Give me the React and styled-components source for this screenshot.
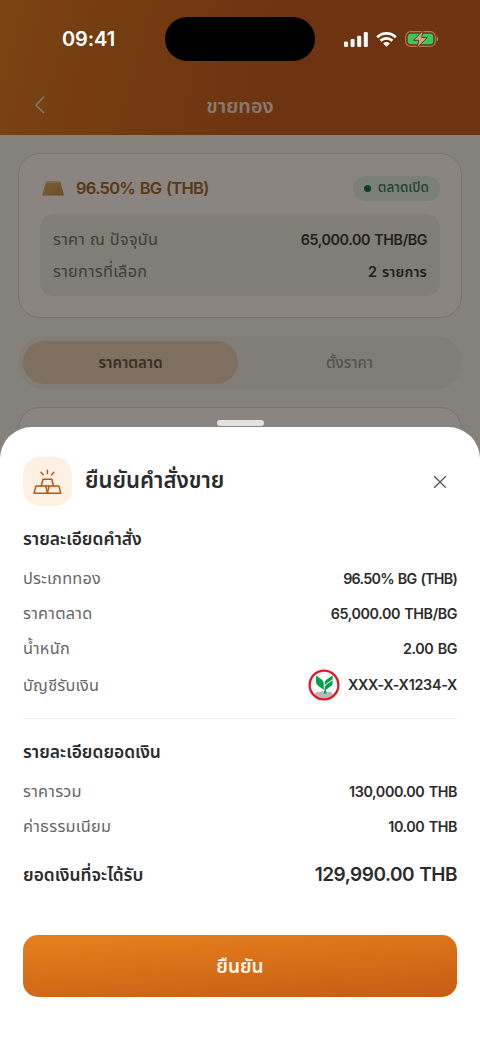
import React from 'react';
import styled, { createGlobalStyle } from 'styled-components';

const GlobalStyle = createGlobalStyle`
  * {
    box-sizing: border-box;
  }
  body {
    margin: 0;
    font-family: Inter, 'Noto Sans Thai', 'Noto Sans', sans-serif;
  }
  p, h1, h2, h3 {
    margin: 0;
  }
  button {
    padding: 0;
    border: 0;
    background: none;
    font-family: inherit;
  }
`;

const Screen = styled.div`
  position: relative;
  width: 480px;
  height: 1044px;
  overflow: hidden;
  background: #f2ebe0;
`;

const Header = styled.header`
  height: 135px;
  background: linear-gradient(105deg, #de7c21 0%, #c85f1f 55%, #c85d1f 100%);
`;

const StatusBar = styled.div`
  position: relative;
  z-index: 2;
  display: grid;
  grid-template-columns: 165px 150px 165px;
  align-items: center;
  height: 77px;
  color: #fff;
`;

const Time = styled.span`
  padding: 1px 0 0 12px;
  text-align: center;
  font-size: 20px;
  font-weight: 600;
  letter-spacing: -0.1px;
`;

const Island = styled.div`
  height: 44px;
  border-radius: 22px;
  background: #000;
`;

const StatusIcons = styled.div`
  display: flex;
  align-items: center;
  gap: 8px;
  padding: 1px 0 0 29px;
`;

const NavBar = styled.div`
  display: grid;
  grid-template-columns: 80px 1fr 80px;
  align-items: center;
  height: 56px;
  color: #f3ded0;
`;

const BackButton = styled.button`
  display: flex;
  justify-content: center;
  color: inherit;
`;

const NavTitle = styled.h1`
  padding-top: 1px;
  text-align: center;
  font-size: 19.9px;
  font-weight: 600;
  line-height: 28px;
`;

const Content = styled.main`
  display: flex;
  flex-direction: column;
  gap: 18px;
  padding: 18px 18px 0;
`;

const Card = styled.section`
  height: 165px;
  padding: 20px 21px;
  border: 1px solid #dad1ca;
  border-radius: 22px;
  background: #fbf2ea;
`;

const CardHead = styled.div`
  display: flex;
  align-items: center;
  height: 28px;
  margin-bottom: 12px;
  padding-left: 2px;
`;

const CardTitle = styled.h2`
  margin-left: 12px;
  font-size: 16.5px;
  font-weight: 600;
  letter-spacing: -0.72px;
  word-spacing: 1px;
  color: #a4662a;
`;

const Badge = styled.span`
  display: flex;
  align-items: center;
  gap: 7px;
  height: 25px;
  margin-left: auto;
  padding: 0 11px;
  border-radius: 13px;
  background: #dfe9db;
  color: #34795a;
  font-size: 13.5px;
  font-weight: 500;
`;

const Dot = styled.i`
  width: 7px;
  height: 7px;
  border-radius: 50%;
  background: #17704f;
`;

const PriceBox = styled.div`
  display: grid;
  grid-template-rows: 32px 32px;
  align-content: center;
  height: 82px;
  padding: 2px 13px 0;
  border-radius: 13px;
  background: #ece5da;
`;

const Tabs = styled.div`
  display: grid;
  grid-template-columns: 1fr 1fr;
  gap: 4px;
  height: 53px;
  padding: 5px;
  border-radius: 27px;
  background: #ece4d9;
`;

const Tab = styled.button`
  padding-top: 2px;
  border-radius: 22px;
  background: ${({ $active }) => ($active ? '#e7caaf' : 'transparent')};
  color: ${({ $active }) => ($active ? '#6a5545' : '#9d958c')};
  font-size: 15px;
  font-weight: ${({ $active }) => ($active ? 600 : 500)};
`;

const Backdrop = styled.div`
  position: absolute;
  inset: 0;
  z-index: 1;
  background: rgba(0, 0, 0, 0.45);
`;

const Sheet = styled.div`
  position: absolute;
  left: 0;
  right: 0;
  bottom: 0;
  z-index: 2;
  height: 617px;
  padding: 30px 23px 0;
  border-radius: 32px 32px 0 0;
  background: #fff;
`;

const Handle = styled.div`
  position: absolute;
  top: -7px;
  left: 217px;
  width: 47px;
  height: 6px;
  border-radius: 3px;
  background: #e3e2e1;
`;

const SheetHead = styled.div`
  display: flex;
  align-items: center;
  height: 49px;
  margin-bottom: 18px;
`;

const IconTile = styled.div`
  display: flex;
  align-items: center;
  justify-content: center;
  width: 49px;
  height: 49px;
  border-radius: 17px;
  background: #fef1e3;
`;

const SheetTitle = styled.h2`
  margin-left: 13px;
  padding-bottom: 1px;
  font-size: 22.1px;
  font-weight: 600;
  color: #2b2b2b;
`;

const CloseButton = styled.button`
  display: flex;
  margin: 0 10.5px 0 auto;
`;

const SectionTitle = styled.h3`
  height: 28px;
  font-size: 17.4px;
  font-weight: 600;
  line-height: 29px;
  color: #2b2b2b;
`;

const Rows = styled.div`
  padding-top: 9px;
`;

const Row = styled.div`
  display: flex;
  align-items: center;
  justify-content: space-between;
  height: ${({ $height }) => $height || 35}px;
`;

const Label = styled.span`
  padding-bottom: 2px;
  font-size: 16.3px;
  font-weight: 400;
  line-height: 24px;
  letter-spacing: 0.25px;
  color: ${({ $dim }) => ($dim ? '#776f68' : '#666')};
`;

const Value = styled.span`
  display: flex;
  align-items: center;
  gap: 8px;
  font-size: 14.3px;
  font-weight: 600;
  line-height: 24px;
  letter-spacing: ${({ $spacing }) => $spacing ?? -0.4}px;
  word-spacing: 1.1px;
  color: ${({ $dim }) => ($dim ? '#403a35' : '#2b2b2b')};
`;

const AccountValue = styled(Value)`
  padding-bottom: 2px;
`;

const Divider = styled.hr`
  height: 1px;
  margin: 13px 0 18px;
  border: 0;
  background: #f1f1f1;
`;

const TotalRow = styled(Row)`
  margin-top: 10px;
  height: 42px;
`;

const TotalLabel = styled.span`
  padding-top: 1px;
  font-size: 17.4px;
  font-weight: 600;
  color: #2b2b2b;
`;

const TotalValue = styled.span`
  padding-bottom: 2px;
  font-size: 19px;
  font-weight: 600;
  letter-spacing: -0.5px;
  word-spacing: 1px;
  color: #2b2b2b;
`;

const ConfirmButton = styled.button`
  display: block;
  width: 100%;
  height: 62px;
  margin-top: 39px;
  padding-top: 3px;
  border-radius: 15px;
  background: linear-gradient(176deg, #e37d1c 10%, #c75e14 95%);
  color: #fff5e8;
  font-size: 19px;
  font-weight: 600;
`;

const SignalIcon = () => (
  <svg width="24" height="15" viewBox="0 0 24 15" fill="#fff">
    <rect x="0" y="9.5" width="4" height="5.5" rx="1.3" />
    <rect x="6.6" y="7" width="4" height="8" rx="1.3" />
    <rect x="13.2" y="3.7" width="4" height="11.3" rx="1.3" />
    <rect x="19.8" y="0" width="4" height="15" rx="1.3" />
  </svg>
);

const WifiIcon = () => (
  <svg width="21" height="15" viewBox="0 0 21 15" fill="none" stroke="#fff" strokeWidth="2.7">
    <path d="M1.2 5.2a13.2 13.2 0 0 1 18.6 0" />
    <path d="M4.6 8.8a8.4 8.4 0 0 1 11.8 0" />
    <path d="M10.5 14.8 7.1 11.4a4.9 4.9 0 0 1 6.8 0Z" fill="#fff" stroke="none" />
  </svg>
);

const BatteryIcon = () => (
  <svg width="34" height="18" viewBox="0 0 34 18">
    <rect x="0.7" y="1.7" width="29.6" height="14.6" rx="4.8" fill="none" stroke="#a87b56" strokeWidth="1.2" />
    <rect x="2.8" y="3.7" width="25.4" height="10.6" rx="3" fill="#34ca5b" />
    <path d="M31.7 6.5c1.9.8 1.9 4.2 0 5Z" fill="#b59073" />
    <path
      d="M18.2.2 8.6 10.3h5.2L12 17.8 22.3 7.6h-5.6Z"
      fill="#c9a68c"
      stroke="#6e3512"
      strokeWidth="1"
    />
  </svg>
);

const GoldBar = () => (
  <svg width="22" height="15" viewBox="0 0 22 15">
    <defs>
      <linearGradient id="gold" x1="0" y1="0" x2="1" y2="1">
        <stop offset="0" stopColor="#e0ad55" />
        <stop offset="0.55" stopColor="#cf9d5a" />
        <stop offset="1" stopColor="#c48d3f" />
      </linearGradient>
    </defs>
    <path d="M5.5.5h11.500q1.200 0 1.700 1.100L22 14.500H0L3.900 1.600Q4.300.5 5.500.5Z" fill="url(#gold)" />
    <path d="M4 1.400h14.600" stroke="#e9c47a" />
  </svg>
);

const GoldStackIcon = () => (
  <svg
    width="30"
    height="26"
    viewBox="0 0 30 26"
    fill="none"
    stroke="#b9551b"
    strokeWidth="1.5"
    strokeLinecap="round"
    strokeLinejoin="round"
  >
    <path d="M14.4 1.2v3.200M8 3.200l2.200 2.500M20.800 3.200l-2.200 2.500" />
    <path d="M8.300 17 10 10.300h8.800L20.500 17" />
    <path d="M1 24.300 2.900 17.100h9.900l1.600 7.200Z" />
    <path d="M14.400 24.300 16 17.100h9.900l1.900 7.200Z" />
    <path d="M12.800 17.100H16" />
  </svg>
);

const BankLogo = () => (
  <svg width="32" height="32" viewBox="0 0 32 32">
    <circle cx="16" cy="16" r="14.4" fill="#fff" />
    <path
      d="M6.500 25.500c.5-2.500 3.500-3.300 5.500-2.500 2.500-1.300 5.500-1.200 7.500 0 2.500-.8 5 .2 5.500 2.300-2.500 3-6 4-9 4s-7-1-9.500-3.800Z"
      fill="#bcb8b4"
    />
    <path d="M8 6.400l6 4.400q1.700 1.300 1.700 3.400v6.800l-5.800-4.400Q8 15 8 12.800Z" fill="#00a04a" />
    <path d="M16.700 14.200q0-2.500 1.900-3.700l6.100-4.100v3.800l-6.200 4.200q-1.200.8-1.800 2Z" fill="#00a04a" />
    <path d="M24.700 11.300v2.200q0 2.500-1.900 3.800l-4.900 3.400q.1 2.200.9 3.700h-3.200q1.100-2.600.9-4.400.1-3.200 2.300-4.700Z" fill="#00a04a" />
    <circle cx="16" cy="16" r="14.4" fill="none" stroke="#e5152b" strokeWidth="2.3" />
  </svg>
);

const orderRows = [
  { label: 'ประเภททอง', value: '96.50% BG (THB)', spacing: -0.73 },
  { label: 'ราคาตลาด', value: '65,000.00 THB/BG' },
  { label: 'น้ำหนัก', value: '2.00 BG' },
];

const amountRows = [
  { label: 'ราคารวม', value: '130,000.00 THB' },
  { label: 'ค่าธรรมเนียม', value: '10.00 THB' },
];

export default function App() {
  return (
    <Screen>
      <GlobalStyle />
      <Header>
        <StatusBar>
          <Time>09:41</Time>
          <Island />
          <StatusIcons>
            <SignalIcon />
            <WifiIcon />
            <BatteryIcon />
          </StatusIcons>
        </StatusBar>
        <NavBar>
          <BackButton aria-label="back">
            <svg width="10" height="18" viewBox="0 0 10 18" fill="none" stroke="currentColor" strokeWidth="1.5">
              <path d="M9 .8 1 9l8 8.2" />
            </svg>
          </BackButton>
          <NavTitle>ขายทอง</NavTitle>
        </NavBar>
      </Header>

      <Content>
        <Card>
          <CardHead>
            <GoldBar />
            <CardTitle>96.50% BG (THB)</CardTitle>
            <Badge>
              <Dot />
              ตลาดเปิด
            </Badge>
          </CardHead>
          <PriceBox>
            <Row $height={32}>
              <Label $dim>ราคา ณ ปัจจุบัน</Label>
              <Value $dim>65,000.00 THB/BG</Value>
            </Row>
            <Row $height={32}>
              <Label $dim>รายการที่เลือก</Label>
              <Value $dim $spacing={0.15}>2 รายการ</Value>
            </Row>
          </PriceBox>
        </Card>
        <Tabs>
          <Tab $active>ราคาตลาด</Tab>
          <Tab>ตั้งราคา</Tab>
        </Tabs>
        <Card />
      </Content>

      <Backdrop />

      <Sheet>
        <Handle />
        <SheetHead>
          <IconTile>
            <GoldStackIcon />
          </IconTile>
          <SheetTitle>ยืนยันคำสั่งขาย</SheetTitle>
          <CloseButton aria-label="close">
            <svg width="14" height="14" viewBox="0 0 14 14" stroke="#555" strokeWidth="1.3">
              <path d="M1.2 1.2l11.6 11.6M12.8 1.2 1.2 12.8" />
            </svg>
          </CloseButton>
        </SheetHead>

        <SectionTitle>รายละเอียดคำสั่ง</SectionTitle>
        <Rows>
          {orderRows.map((row) => (
            <Row key={row.label}>
              <Label>{row.label}</Label>
              <Value $spacing={row.spacing}>{row.value}</Value>
            </Row>
          ))}
          <Row $height={39}>
            <Label>บัญชีรับเงิน</Label>
            <AccountValue $spacing={-0.27}>
              <BankLogo />
              XXX-X-X1234-X
            </AccountValue>
          </Row>
        </Rows>
        <Divider />
        <SectionTitle>รายละเอียดยอดเงิน</SectionTitle>
        <Rows>
          {amountRows.map((row) => (
            <Row key={row.label}>
              <Label>{row.label}</Label>
              <Value>{row.value}</Value>
            </Row>
          ))}
        </Rows>
        <TotalRow>
          <TotalLabel>ยอดเงินที่จะได้รับ</TotalLabel>
          <TotalValue>129,990.00 THB</TotalValue>
        </TotalRow>
        <ConfirmButton>ยืนยัน</ConfirmButton>
      </Sheet>
    </Screen>
  );
}
